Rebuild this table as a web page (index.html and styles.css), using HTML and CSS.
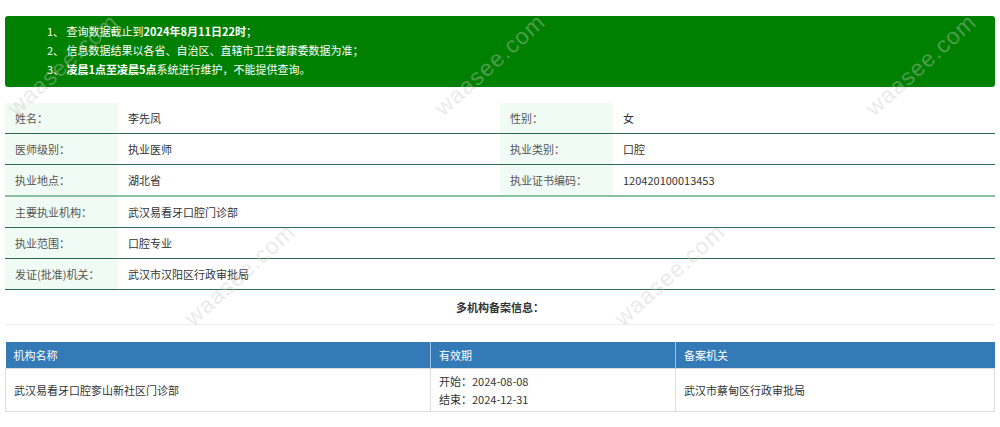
FILE: index.html
```html
<!DOCTYPE html>
<html lang="zh-CN">
<head>
<meta charset="utf-8">
<title>医师执业信息查询</title>
<link rel="stylesheet" href="styles.css">
</head>
<body>
<div class="page">
  <div class="notice">
    <div class="notice-line">1、 查询数据截止到<b>2024年8月11日22时</b>；</div>
    <div class="notice-line">2、 信息数据结果以各省、自治区、直辖市卫生健康委数据为准；</div>
    <div class="notice-line">3、 <b>凌晨1点至凌晨5点</b>系统进行维护，不能提供查询。</div>
  </div>

  <div class="info">
    <div class="row row-4">
      <div class="label">姓名：</div><div class="value">李先凤</div>
      <div class="label">性别：</div><div class="value">女</div>
    </div>
    <div class="row row-4">
      <div class="label">医师级别：</div><div class="value">执业医师</div>
      <div class="label">执业类别：</div><div class="value">口腔</div>
    </div>
    <div class="row row-4 row-split">
      <div class="label">执业地点：</div><div class="value">湖北省</div>
      <div class="label">执业证书编码：</div><div class="value">120420100013453</div>
    </div>
    <div class="row row-2">
      <div class="label">主要执业机构：</div><div class="value">武汉易看牙口腔门诊部</div>
    </div>
    <div class="row row-2">
      <div class="label">执业范围：</div><div class="value">口腔专业</div>
    </div>
    <div class="row row-2">
      <div class="label">发证(批准)机关：</div><div class="value">武汉市汉阳区行政审批局</div>
    </div>
  </div>

  <div class="section-title">多机构备案信息：</div>

  <table class="orgs">
    <colgroup>
      <col class="c1"><col class="c2"><col class="c3">
    </colgroup>
    <thead>
      <tr><th>机构名称</th><th>有效期</th><th>备案机关</th></tr>
    </thead>
    <tbody>
      <tr>
        <td>武汉易看牙口腔奓山新社区门诊部</td>
        <td>开始：2024-08-08<br>结束：2024-12-31</td>
        <td>武汉市蔡甸区行政审批局</td>
      </tr>
    </tbody>
  </table>
</div>

<div class="watermarks" aria-hidden="true">
  <span class="wm wm-a">waasee.com</span>
  <span class="wm wm-b">waasee.com</span>
  <span class="wm wm-c">waasee.com</span>
  <span class="wm wm-d">waasee.com</span>
  <span class="wm wm-e">waasee.com</span>
</div>
</body>
</html>
```

FILE: styles.css
```css
html, body {
  margin: 0;
  padding: 0;
  background: #fff;
}
body {
  font-family: "Noto Sans CJK SC", "Microsoft YaHei", sans-serif;
  font-size: 11px;
  color: #333;
  position: relative;
  overflow: hidden;
  height: 427px;
}
.page {
  padding: 16px 5px 0;
}
.notice {
  background: #008000;
  border-radius: 3px;
  color: #fff;
  padding: 6px 0 8px 42px;
  line-height: 19px;
  margin-bottom: 16px;
}
.notice b {
  font-weight: 700;
}

.info {
  display: flex;
  flex-direction: column;
}
.row {
  display: grid;
  height: 31px;
  box-sizing: border-box;
  border-bottom: 1px solid #2e6b50;
}
.row-4 {
  grid-template-columns: 113px 382px 113px 1fr;
}
.row-2 {
  grid-template-columns: 113px 1fr;
}
.row-split {
  height: 32px;
  border-bottom: 2px solid #8dbfa5;
}
.label, .value {
  display: flex;
  align-items: center;
  padding-left: 10px;
}
.label {
  background: #effbf4;
  color: #555;
}
.value {
  color: #333;
}

.section-title {
  height: 35px;
  box-sizing: border-box;
  border-bottom: 1px solid #eeeeee;
  display: flex;
  align-items: center;
  justify-content: center;
  font-weight: 700;
  color: #333;
  margin-bottom: 17px;
}

.orgs {
  width: 100%;
  border-collapse: collapse;
  table-layout: fixed;
}
.orgs .c1 { width: 425px; }
.orgs .c2 { width: 245px; }
.orgs th {
  background: #337ab7;
  color: #fff;
  font-weight: 400;
  text-align: left;
  height: 26px;
  padding: 0 8px;
  border-right: 1px solid #9fc1df;
}
.orgs th:last-child {
  border-right: none;
}
.orgs td {
  border: 1px solid #dddddd;
  padding: 3px 8px;
  line-height: 18px;
  height: 36px;
  color: #333;
}

.watermarks {
  position: absolute;
  inset: 0;
  pointer-events: none;
}
.wm {
  position: absolute;
  font-family: "Liberation Sans", Arial, sans-serif;
  font-size: 23px;
  letter-spacing: 1px;
  color: rgba(200, 200, 200, 0.4);
  white-space: nowrap;
  transform: translate(-50%, -50%) rotate(-42deg);
}
.wm-a { left: 63px; top: 65px; }
.wm-b { left: 490px; top: 65px; }
.wm-c { left: 921px; top: 65px; }
.wm-d { left: 240px; top: 275px; }
.wm-e { left: 670px; top: 275px; }
```
